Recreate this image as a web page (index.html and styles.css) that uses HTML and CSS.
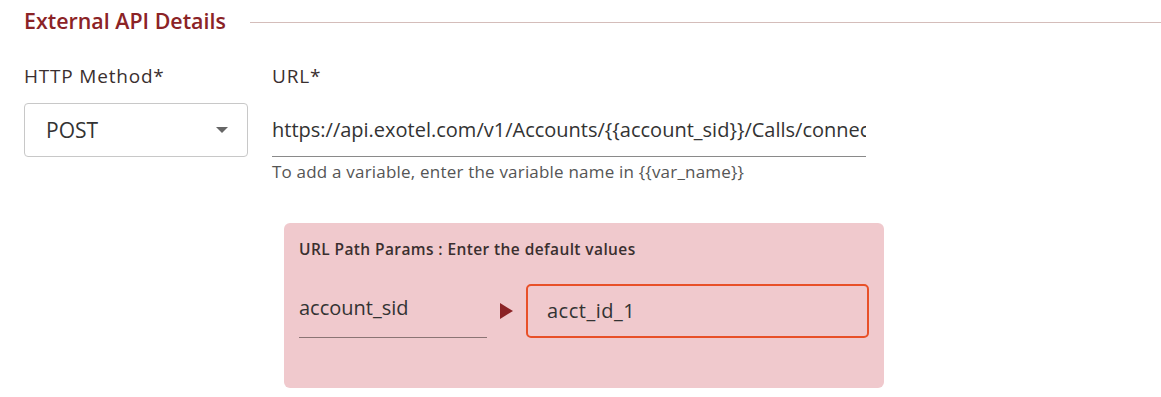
FILE: index.html
```html
<!DOCTYPE html>
<html lang="en">
<head>
    <meta charset="UTF-8">
    <meta name="viewport" content="width=device-width, initial-scale=1.0">
    <title>External API Details</title>
    <link rel="stylesheet" href="styles.css">
</head>
<body>
    <div class="section-title">
        <h2>External API Details</h2>
        <div class="title-line"></div>
    </div>

    <div class="form-row">
        <div class="method-col">
            <label>HTTP Method*</label>
            <div class="select-box">
                <span>POST</span>
                <svg class="caret" width="12" height="6" viewBox="0 0 12 6"><path d="M0 0h12L6 6z" fill="#666"/></svg>
            </div>
        </div>
        <div class="url-col">
            <label>URL*</label>
            <div class="url-input">https://api.exotel.com/v1/Accounts/{{account_sid}}/Calls/connect</div>
            <p class="hint">To add a variable, enter the variable name in {{var_name}}</p>

            <div class="params-box">
                <div class="params-title">URL Path Params : Enter the default values</div>
                <div class="param-row">
                    <div class="param-name">account_sid</div>
                    <svg class="arrow" width="13" height="16" viewBox="0 0 13 16"><path d="M0 0L13 8L0 16z" fill="#8b2326"/></svg>
                    <div class="param-value">acct_id_1</div>
                </div>
            </div>
        </div>
    </div>
</body>
</html>
```

FILE: styles.css
```css
body {
    margin: 0;
    padding: 6px 0 0 24px;
    font-family: "Open Sans", sans-serif;
    color: #3a3232;
    background: #fff;
}
.section-title {
    display: flex;
    align-items: center;
    gap: 24px;
}
.section-title h2 {
    margin: 0;
    font-size: 21.4px;
    font-weight: 600;
    color: #8b2326;
    line-height: 30px;
}
.title-line {
    flex: 1;
    height: 1px;
    background-color: #d4bdba;
    margin-top: 2px;
}
.form-row {
    display: flex;
    gap: 24px;
    margin-top: 27px;
}
label {
    display: block;
    font-size: 19px;
    letter-spacing: 0.8px;
    line-height: 26px;
    color: #3a2f2f;
}
.method-col {
    width: 224px;
}
.select-box {
    margin-top: 14px;
    height: 52px;
    border: 1px solid #c8c8c8;
    border-radius: 4px;
    display: flex;
    align-items: center;
    justify-content: space-between;
    padding: 0 19px 0 21px;
    font-size: 21px;
    color: #333;
}
.caret {
    display: block;
}
.url-col {
    width: 594px;
}
.url-input {
    margin-top: 15px;
    height: 52px;
    line-height: 52px;
    border-bottom: 1px solid #8a8a8a;
    font-size: 20px;
    color: #333;
    white-space: nowrap;
    overflow: hidden;
}
.hint {
    margin: 4px 0 0;
    font-size: 17px;
    letter-spacing: 0.2px;
    line-height: 22px;
    color: #555;
}
.params-box {
    margin: 40px 0 0 12px;
    width: 600px;
    height: 165px;
    box-sizing: border-box;
    background-color: #f0c9cd;
    border-radius: 6px;
    padding: 16px 15px;
}
.params-title {
    font-size: 15.5px;
    letter-spacing: 0.4px;
    font-weight: 600;
    color: #3a2f2f;
    line-height: 20px;
}
.param-row {
    display: flex;
    align-items: center;
    margin-top: 25px;
}
.param-name {
    width: 188px;
    height: 54px;
    box-sizing: border-box;
    border-bottom: 1px solid #8b7474;
    font-size: 20px;
    line-height: 48px;
    color: #333;
}
.arrow {
    margin: 0 13px 0 13px;
    display: block;
}
.param-value {
    flex: 1;
    height: 54px;
    box-sizing: border-box;
    border: 2px solid #e85028;
    border-radius: 5px;
    padding: 0 19px;
    font-size: 20px;
    letter-spacing: 0.5px;
    line-height: 50px;
    color: #333;
}
```
